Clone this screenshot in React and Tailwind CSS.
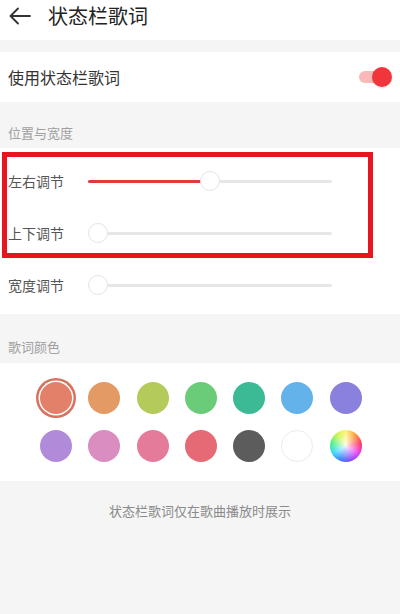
import React from 'react';

const rowFont = { fontFamily: '"Noto Sans CJK SC", "Noto Sans", sans-serif' };

const colorsTop = ['#e3806a', '#e49a64', '#b4ca5a', '#6acc79', '#3cba96', '#63b2e9', '#8a80dd'];
const colorsBottom = ['#b18bda', '#d98dc1', '#e57b9b', '#e56a75', '#5c5c5c', '#ffffff', 'wheel'];

const Slider = ({ value }) => {
  // knob centre moves between 10px and (width - 10px)
  const knobLeft = `calc(${value} * (100% - 20px))`;
  return (
    <div className="relative h-[20px] w-[244px]">
      <div className="absolute left-0 right-0 top-[8.5px] h-[3px] rounded-full bg-[#e6e6e6]" />
      {value > 0 && (
        <div
          className="absolute left-0 top-[8.5px] h-[3px] rounded-full bg-[#e03b3b]"
          style={{ width: `calc(${value} * (100% - 20px) + 2px)` }}
        />
      )}
      <div
        className="absolute top-0 h-[20px] w-[20px] rounded-full border border-[#e4e4e4] bg-white"
        style={{ left: knobLeft }}
      />
    </div>
  );
};

const SliderRow = ({ label, value }) => (
  <div className="flex h-[52px] items-center pl-[8px]">
    <span className="w-[80px] text-[14px] leading-[20px] text-[#555]">{label}</span>
    <Slider value={value} />
  </div>
);

const Swatch = ({ color, selected }) => {
  if (color === 'wheel') {
    return (
      <div className="relative h-[32px] w-[32px] overflow-hidden rounded-full bg-[conic-gradient(from_0deg,#fff37a,#ff9a3c,#ff3b6b,#e83cf0,#8a4dff,#3d7dff,#37d6ff,#4cf08a,#c8f54a,#fff37a)]">
        <div className="absolute inset-0 rounded-full bg-[radial-gradient(circle,rgba(255,255,255,0.9)_0%,rgba(255,255,255,0)_65%)]" />
      </div>
    );
  }
  if (color === '#ffffff') {
    return <div className="h-[32px] w-[32px] rounded-full border border-[#ececec] bg-white" />;
  }
  return (
    <div
      className={
        selected
          ? 'h-[32px] w-[32px] rounded-full shadow-[0_0_0_1.5px_#ffffff,0_0_0_4px_#d8715e]'
          : 'h-[32px] w-[32px] rounded-full'
      }
      style={{ backgroundColor: color }}
    />
  );
};

export default function App() {
  return (
    <div className="relative h-[614px] w-[400px] overflow-hidden bg-[#f5f5f5]" style={rowFont}>
      {/* Header */}
      <div className="flex h-[40px] items-start bg-white pt-[6px]">
        <svg className="ml-[9px] mt-0" width="22" height="20" viewBox="0 0 22 20" fill="none">
          <path d="M2 10 H21" stroke="#333" strokeWidth="1.8" strokeLinecap="round" />
          <path d="M9 2.5 L1.5 10 L9 17.5" stroke="#333" strokeWidth="1.8" strokeLinecap="round" strokeLinejoin="round" />
        </svg>
        <h1 className="ml-[17px] text-[20px] leading-[20px] text-[#222]">状态栏歌词</h1>
      </div>

      {/* Toggle row */}
      <div className="mt-[12px] flex h-[50px] items-center justify-between bg-white pl-[8px] pr-[8px]">
        <span className="text-[16px] leading-[20px] text-[#333]">使用状态栏歌词</span>
        <div className="relative h-[20px] w-[34px]">
          <div className="absolute left-[1px] right-[4px] top-[4px] h-[12px] rounded-full bg-[#f9b9b9]" />
          <div className="absolute right-0 top-0 h-[20px] w-[20px] rounded-full bg-[#f0363b] shadow-[0_1px_2px_rgba(0,0,0,0.15)]" />
        </div>
      </div>

      {/* Section: position & width */}
      <div className="flex h-[46px] items-end pb-[7px] pl-[8px]">
        <span className="text-[13px] leading-[16px] text-[#a0a0a0]">位置与宽度</span>
      </div>
      <div className="bg-white pb-[3px] pt-[7px]">
        <SliderRow label="左右调节" value={0.5} />
        <SliderRow label="上下调节" value={0} />
        <SliderRow label="宽度调节" value={0} />
      </div>

      {/* Section: lyric colour */}
      <div className="flex h-[49px] items-end pb-[8px] pl-[8px]">
        <span className="text-[13px] leading-[16px] text-[#a0a0a0]">歌词颜色</span>
      </div>
      <div className="flex flex-col gap-[16px] bg-white pb-[19px] pl-[40px] pt-[19px]">
        <div className="flex gap-x-[16.3px]">
          {colorsTop.map((c, i) => (
            <Swatch key={c} color={c} selected={i === 0} />
          ))}
        </div>
        <div className="flex gap-x-[16.3px]">
          {colorsBottom.map((c) => (
            <Swatch key={c} color={c} />
          ))}
        </div>
      </div>

      {/* Footer note */}
      <div className="pt-[22px] text-center text-[13px] leading-[16px] text-[#8a8a8a]">
        状态栏歌词仅在歌曲播放时展示
      </div>

      {/* Red annotation frame */}
      <div className="pointer-events-none absolute left-[2px] top-[152px] h-[106px] w-[371px] border-[5px] border-[#e8141f]" />
    </div>
  );
}
